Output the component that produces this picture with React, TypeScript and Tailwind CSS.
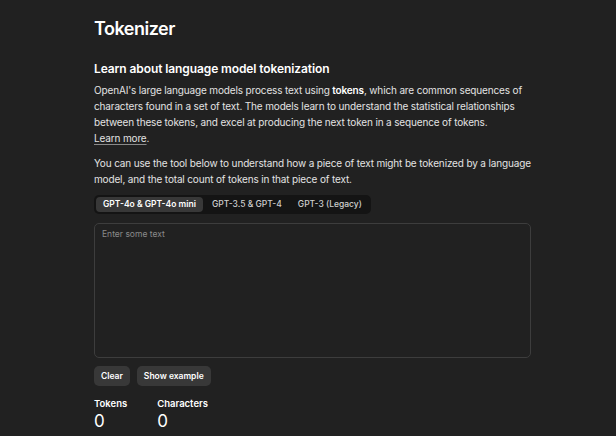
import { useState } from 'react';

const tabs = ['GPT-4o & GPT-4o mini', 'GPT-3.5 & GPT-4', 'GPT-3 (Legacy)'];

export default function App() {
    const [active, setActive] = useState(0);
    const [text, setText] = useState('');

    return (
        <div
            className="min-h-screen w-full bg-[#212121] text-[#ececec]"
            style={{ fontFamily: 'Inter, "Liberation Sans", sans-serif' }}
        >
            <div className="ml-[94px] w-[437px] pt-[16px]">
                <h1 className="text-[18px] font-semibold leading-[26px] tracking-[-0.5px] text-white">Tokenizer</h1>

                <h2 className="mt-[19px] text-[12px] font-semibold leading-[16px] tracking-[-0.1px] text-white">
                    Learn about language model tokenization
                </h2>
                <p className="mt-[5px] text-[10px] leading-[16px] tracking-[-0.15px] text-[#e3e3e3]">
                    OpenAI's large language models process text using <span className="font-semibold text-white">tokens</span>, which are common sequences of characters found in a set of text. The models learn to understand the statistical relationships between these tokens, and excel at producing the next token in a sequence of tokens.
                    <br />
                    <a className="underline decoration-[#8a8a8a] underline-offset-2">Learn more</a>.
                </p>
                <p className="mt-[9px] text-[10px] leading-[16px] tracking-[-0.15px] text-[#e3e3e3]">
                    You can use the tool below to understand how a piece of text might be tokenized by a language model, and the total count of tokens in that piece of text.
                </p>

                {/* Model tabs */}
                <div className="mt-[8px] inline-flex items-center gap-[2px] rounded-[5px] bg-[#141414] p-[2px]">
                    {tabs.map((t, i) => (
                        <button
                            key={t}
                            onClick={() => setActive(i)}
                            className={
                                i === active
                                    ? 'h-[15px] rounded-[4px] bg-[#383838] px-[7px] text-[8.5px] font-semibold leading-[15px] text-white'
                                    : 'h-[15px] rounded-[4px] px-[7px] text-[8.5px] font-medium leading-[15px] text-[#cfcfcf]'
                            }
                        >
                            {t}
                        </button>
                    ))}
                </div>

                <textarea
                    value={text}
                    onChange={(e) => setText(e.target.value)}
                    placeholder="Enter some text"
                    className="mt-[9px] block h-[135px] w-full resize-none rounded-[5px] border border-[#3d3d3d] bg-[#212121] px-[7px] py-[4px] text-[8.5px] text-white outline-none placeholder:text-[#8a8a8a]"
                />

                <div className="mt-[8px] flex gap-[7px]">
                    <button
                        onClick={() => setText('')}
                        className="h-[20px] rounded-[5px] bg-[#383838] px-[7px] text-[8.5px] font-semibold text-white"
                    >
                        Clear
                    </button>
                    <button className="h-[20px] rounded-[5px] bg-[#383838] px-[7px] text-[8.5px] font-semibold text-white">
                        Show example
                    </button>
                </div>

                <div className="mt-[12px] flex gap-[30px]">
                    <div>
                        <div className="text-[9.5px] font-semibold leading-[12px] text-white">Tokens</div>
                        <div className="text-[17px] leading-[22px] text-white">0</div>
                    </div>
                    <div>
                        <div className="text-[9.5px] font-semibold leading-[12px] text-white">Characters</div>
                        <div className="text-[17px] leading-[22px] text-white">{text.length}</div>
                    </div>
                </div>
            </div>
        </div>
    );
}
